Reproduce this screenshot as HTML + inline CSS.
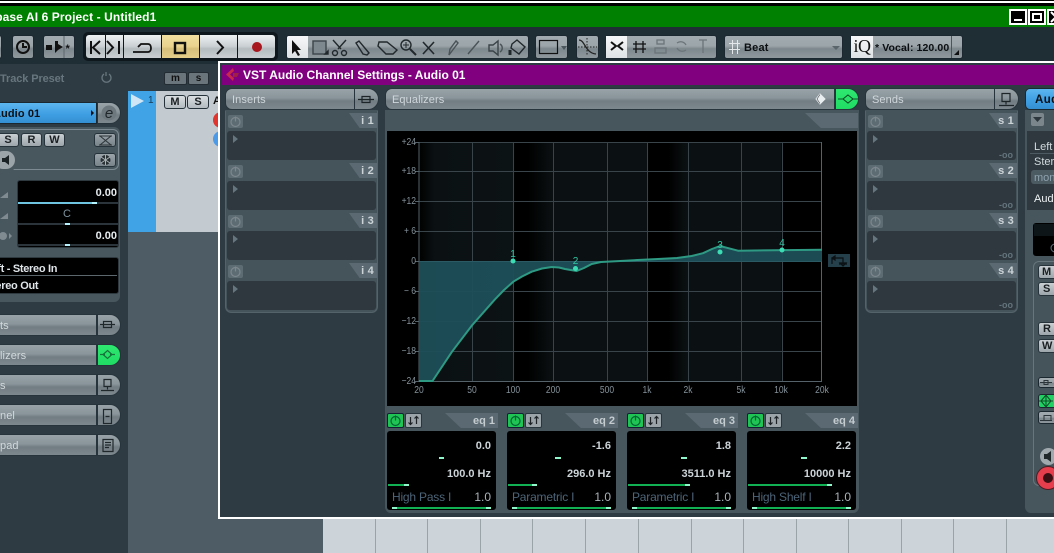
<!DOCTYPE html>
<html><head><meta charset="utf-8"><style>
html,body{margin:0;padding:0;background:#2f3b42}
body{position:relative;width:1054px;height:553px;overflow:hidden;font-family:"Liberation Sans",sans-serif}
div,span{position:absolute;box-sizing:border-box;white-space:nowrap}
svg{position:absolute;overflow:visible}
.g{background:linear-gradient(#a2abb0,#9ca5aa 45%,#7d888e 58%,#8e989d);}
.bb{border:1px solid #1c2830;border-radius:3px}
.w{background:linear-gradient(#eef1f2,#c9cfd2 50%,#b5bcc0 60%,#c9cfd2)}
.hd{background:linear-gradient(#98a3a8,#8a959b 45%,#727d83 60%,#7d888e);border:1px solid #28343b;border-radius:7px 0 0 7px;color:#cfd7db;font-size:11px;letter-spacing:.1px;line-height:22px;padding-left:6px;height:22px}
.hb{background:linear-gradient(#98a3a8,#8a959b 45%,#727d83 60%,#7d888e);border:1px solid #28343b;border-radius:0 11px 11px 0;height:22px}
.col{background:#45535b;top:110px;height:203px;border-radius:0 0 6px 6px}
.tab{background:#5b6a72;clip-path:polygon(0 0,100% 0,100% 100%,38% 100%);height:15px;color:#ccd4d8;font-size:11px;font-weight:bold;text-align:right;line-height:17px;padding-right:3px;letter-spacing:.2px}
.slot{background:#2e383e;height:29px;border-radius:3px;width:149px}
.pw{width:15px;height:13px;background:#5d6b73;border-radius:2px}
.ar{width:0;height:0;border-left:5px solid #66767e;border-top:4px solid transparent;border-bottom:4px solid transparent}
.oo{color:#64747c;font-size:9px;font-weight:bold;right:3px;bottom:0}
.ax{color:#84929a;font-size:10px;line-height:10px;transform:scaleX(.85)}
.yl{width:30px;left:386px;text-align:right;transform-origin:right center}
.xl{width:30px;text-align:center;top:386px}
.pn{background:#000;border-radius:3px;width:109px;height:79px;top:431px}
.v{color:#ccd4d8;font-weight:bold;font-size:11px;right:5px;line-height:12px}
.n{color:#4d6579;font-size:12px;left:5px;top:60px;letter-spacing:-.2px;line-height:13px}
.q{color:#a9b3b8;font-size:12px;right:5px;top:60px;line-height:13px}
.sl{background:#11b052;height:2px;left:1px;top:53px}
.mk{background:#8ff7cb;height:2px}
.on{width:17px;height:15px;top:413px;background:#20c455;border-radius:2px;border:1px solid #123}
.sw{width:17px;height:15px;top:413px;background:#9aa4a9;border-radius:2px;border:1px solid #2a363d}
.et{top:413px;width:53px;height:15px;background:#5b6a72;clip-path:polygon(0 0,100% 0,100% 100%,30% 100%);color:#c4ccd0;font-size:11px;font-weight:bold;text-align:right;line-height:17px;padding-right:3px;letter-spacing:0}
.rk{left:-6px;width:103px;height:22px;padding-left:0;border-radius:0;color:#cfd7db}
.rb{left:97px;width:24px}
.mb{background:linear-gradient(#c9cfd3,#9da6ab);border:1px solid #27333a;border-radius:3px;color:#1a1f22;font-weight:bold;font-size:11px;text-align:center;line-height:12px}
.rl{left:0;color:#d2dadd;font-size:11px;letter-spacing:.1px;line-height:13px}
</style></head><body>
<svg width="0" height="0" style="position:absolute"><defs>
<symbol id="p" viewBox="0 0 15 13"><circle cx="7.5" cy="7" r="4.5" fill="none" stroke="currentColor" stroke-width="1.2"/><path d="M7.5 1.500v5" stroke="currentColor" stroke-width="1.2"/></symbol>
<symbol id="s" viewBox="0 0 17 15"><path d="M5.500 11.500V4M3.500 9.500l2 2 2-2M11.500 11V3.500M9.500 5.500l2-2 2 2" fill="none" stroke="#1c2226" stroke-width="1.200"/></symbol>
</defs></svg>

<!-- screen top -->
<div style="left:0;top:0;width:1054px;height:6px;background:#000"></div>
<div style="left:0;top:1px;width:1054px;height:2px;background:#fff"></div>
<div style="left:0;top:6px;width:1054px;height:21px;background:#008000"></div>
<div style="left:-21px;top:10px;color:#fff;font-weight:bold;font-size:12px;line-height:15px;letter-spacing:.1px">Cubase AI 6 Project - Untitled1</div>
<div style="left:1009px;top:9px;width:18px;height:16px;background:#000;border:2px solid #fff"><span style="left:3px;top:8px;width:8px;height:2px;background:#fff"></span></div>
<div style="left:1028px;top:9px;width:18px;height:16px;background:#000;border:2px solid #fff"><span style="left:2px;top:2px;width:10px;height:8px;border:2px solid #fff"></span></div>
<div style="left:1047px;top:9px;width:18px;height:16px;background:#000;border:2px solid #fff"><svg style="left:2px;top:1px" width="10" height="10"><path d="M0 0l10 10M10 0L0 10" stroke="#fff" stroke-width="2"/></svg></div>

<!-- toolbar -->
<div style="left:0;top:27px;width:1054px;height:37px;background:#1f2d35"></div>
<div class="g bb" style="left:-8px;top:35px;width:10px;height:24px"></div>
<div class="g bb" style="left:12px;top:35px;width:22px;height:24px"></div>
<svg style="left:12px;top:35px" width="22" height="24"><circle cx="11" cy="12" r="6" fill="none" stroke="#111" stroke-width="2"/><path d="M11 8v4h4" fill="none" stroke="#111" stroke-width="2"/></svg>
<div class="g bb" style="left:43px;top:35px;width:32px;height:24px"></div>
<svg style="left:43px;top:35px" width="32" height="24"><path d="M3 10h6v5H3zM12 6l3 0v3l5 3-5 3-3 3z" fill="#111"/><path d="M21 1v22" stroke="#5c666c"/><text x="22.5" y="17" font-family="Liberation Sans" font-weight="bold" font-size="11" fill="#111">*</text></svg>
<div style="left:83px;top:32px;width:195px;height:29px;background:#0e171c;border-radius:5px"></div>
<div class="w" style="left:86px;top:35px;width:19px;height:23px;border-radius:3px 0 0 3px"></div>
<div class="w" style="left:106px;top:35px;width:17px;height:23px"></div>
<div class="w" style="left:124px;top:35px;width:37px;height:23px"></div>
<div style="left:162px;top:35px;width:37px;height:23px;background:linear-gradient(#f2e0a0,#e8d28c 50%,#d6bf7a 60%,#e4ce8a)"></div>
<div class="w" style="left:200px;top:35px;width:37px;height:23px"></div>
<div class="w" style="left:238px;top:35px;width:37px;height:23px;border-radius:0 3px 3px 0"></div>
<svg style="left:83px;top:32px" width="195" height="29" fill="none" stroke="#111" stroke-width="2"><path d="M8 9v13M17 9l-7 6.500 7 6.500M24 9l6 6.500-6 6.500M36 9v13"/><path d="M50 20h15c4 0 4-8 0-8h-7l-3 3" stroke-width="1.800"/><rect x="92" y="11" width="10" height="10" stroke-width="2.400"/><path d="M134 9l6 6.500-6 6.500"/></svg>
<svg style="left:83px;top:32px" width="195" height="29"><circle cx="174" cy="15" r="5" fill="#a8161e"/></svg>

<div class="g bb" style="left:286px;top:35px;width:243px;height:24px"></div>
<div class="w" style="left:287px;top:36px;width:21px;height:22px;border-radius:2px 0 0 2px;background:linear-gradient(#f6f7f8,#dfe3e5)"></div>
<svg style="left:286px;top:35px" width="243" height="26" fill="none" stroke="#22292d" stroke-width="1.4">
<path d="M6 5l0 14 3-3 3 5 2-1-3-5 4 0z" fill="#111" stroke="none"/>
<rect x="27" y="6" width="13" height="13" fill="#7d888e" stroke="#3b4449"/><path d="M39 19l3 0 0-3z" fill="#111"/>
<path d="M47 5l8 9M60 5l-8 9"/><circle cx="49" cy="18" r="2.500"/><circle cx="58" cy="18" r="2.500"/>
<path d="M70 8l3-2 10 12-2 2-4-1z"/>
<path d="M93 7h8l10 8-4 4h-7l-8-8z"/>
<circle cx="120" cy="10" r="5"/><path d="M124 14l6 6" stroke-width="2"/><path d="M117 10h6M120 7v6" stroke-width="1"/>
<path d="M137 7l11 12M148 7l-11 12" stroke-width="1.600"/>
<path d="M163 20l1-6 6-8 2 2-6 8zM163 20" stroke="#4a5358"/>
<path d="M182 19l11-13" stroke="#4a5358"/>
<path d="M203 10h4l5-4v14l-5-4h-4z" stroke="#3a4348"/><path d="M214 9c3 2 3 6 0 8" stroke="#4a5358"/>
<path d="M226 9l5-4 8 7-6 7-8-6z"/><path d="M224 15v5" stroke-width="3"/>
</svg>
<div class="g bb" style="left:535px;top:35px;width:33px;height:24px"></div>
<svg style="left:535px;top:35px" width="33" height="24"><rect x="4.500" y="5.500" width="18" height="13" fill="none" stroke="#111" stroke-width="1.200"/><path d="M26 11h6l-3 4z" fill="#4b565c"/></svg>
<div class="g bb" style="left:576px;top:35px;width:23px;height:24px"></div>
<svg style="left:576px;top:35px" width="23" height="24" fill="none" stroke="#222"><path d="M3 5c6 0 6 13 17 14" stroke="#222" stroke-width="1.300"/><path d="M2 12h19" stroke-dasharray="1.500 1.500"/><path d="M11 3v18" stroke-dasharray="1.500 1.500"/></svg>
<div class="g bb" style="left:605px;top:35px;width:112px;height:24px"></div>
<div style="left:606px;top:36px;width:21px;height:22px;background:linear-gradient(#f6f7f8,#dfe3e5)"></div>
<svg style="left:605px;top:35px" width="112" height="24" fill="none" stroke="#111" stroke-width="1.300"><path d="M6 7l5 4-5 4M18 7l-5 4 5 4" stroke-width="2"/><path d="M28 9h13M28 14h13M31 6v12M38 6v12"/><g stroke="#6a7479"><rect x="52" y="5" width="7" height="4"/><rect x="50" y="13" width="11" height="5"/><path d="M72 8a6 6 0 0 1 9 2M81 15a6 6 0 0 1-9-2"/><path d="M94 5h8M98 5v13"/></g></svg>
<div class="g bb" style="left:724px;top:35px;width:119px;height:24px"></div>
<svg style="left:724px;top:35px" width="119" height="24" fill="none" stroke="#e3e7e9"><path d="M5 8.500h11M5 14.500h11M8.500 5v14M13.500 5v14"/><path d="M108 11h8l-4 4z" fill="#5a656b" stroke="none"/></svg>
<div style="left:744px;top:42px;font-size:11px;font-weight:bold;color:#0c0f11;line-height:13px;letter-spacing:.2px">Beat</div>
<div class="g bb" style="left:850px;top:35px;width:113px;height:24px"></div>
<div style="left:851px;top:36px;width:22px;height:22px;background:linear-gradient(#f6f7f8,#dfe3e5);color:#111;font-family:'Liberation Serif',serif;font-size:18px;line-height:21px;text-align:center;letter-spacing:-.5px">iQ</div>
<div style="left:875px;top:42px;font-size:10.500px;font-weight:bold;color:#0c0f11;line-height:13px;letter-spacing:.1px">* Vocal: 120.00</div>
<div style="left:951px;top:36px;width:1px;height:22px;background:#4b565c"></div>
<svg style="left:954px;top:50px" width="6" height="6"><path d="M5 0v5H0z" fill="#111"/></svg>

<!-- left inspector -->
<div style="left:0;top:64px;width:128px;height:489px;background:#2f3b42"></div>
<div style="left:0;top:73px;font-size:11px;font-weight:bold;color:#67767e;line-height:13px;letter-spacing:-.1px">Track Preset</div>
<svg style="left:100px;top:71px" width="12" height="13" fill="none" stroke="#67767e" stroke-width="1.300"><path d="M4 3a4.500 4.500 0 1 0 5 0M6 1v4"/></svg>
<div style="left:-8px;top:102px;width:105px;height:22px;background:linear-gradient(#5cb6ef,#3f9fe3 55%,#338fd2);border:1px solid #1c2830;border-radius:4px 0 0 4px;font-size:11px;font-weight:bold;color:#0b1014;line-height:22px;padding-left:0;letter-spacing:.1px">Audio 01</div>
<svg style="left:91px;top:110px" width="4" height="6"><path d="M0 0l3 3-3 3z" fill="#111"/></svg>
<div class="hb" style="left:97px;top:102px;width:24px"></div>
<svg style="left:97px;top:102px" width="24" height="22"><circle cx="12" cy="11" r="7.500" fill="#6d787e"/><text x="12" y="16" text-anchor="middle" font-family="Liberation Sans" font-size="15" font-style="italic" fill="#1f272b">e</text></svg>
<div style="left:-6px;top:127px;width:126px;height:175px;background:#48565e;border-radius:6px"></div>
<div style="left:-8px;top:129px;width:127px;height:41px;border:1px solid #7d8a91;border-radius:6px;clip-path:polygon(0 0,100% 0,100% 100%,17% 100%,17% 90%,0 90%)"></div>
<div class="mb" style="left:-3px;top:133px;width:22px;height:14px">S</div>
<div class="mb" style="left:21px;top:133px;width:21px;height:14px">R</div>
<div class="mb" style="left:44px;top:133px;width:21px;height:14px">W</div>
<div class="mb" style="left:94px;top:133px;width:22px;height:14px;background:linear-gradient(#9aa4a9,#78838a)"><svg style="left:3px;top:1px" width="15" height="11" fill="none" stroke="#2c3438"><path d="M1 1h13M1 10h13M2 1l11 9M13 1L2 10"/></svg></div>
<div class="mb" style="left:94px;top:153px;width:22px;height:14px;background:linear-gradient(#9aa4a9,#78838a)"><svg style="left:4px;top:0" width="13" height="12"><circle cx="6.500" cy="6" r="5" fill="#2a3135"/><path d="M6.500 1v10M2 3l9 6M11 3l-9 6" stroke="#aab2b6"/></svg></div>
<div style="left:-6px;top:151px;width:21px;height:18px;border-radius:9px;background:#9aa4a9"></div>
<svg style="left:1px;top:154px" width="10" height="12"><path d="M1 4h3l4-3v10L4 8H1z" fill="#1c2326"/></svg>
<svg style="left:0;top:188px" width="16" height="60"><path d="M0 7L8 1v6z" fill="#7f8b91" transform="translate(0 3)"/><path d="M0 28L8 22v6z" fill="#7f8b91" transform="translate(0 3)"/><circle cx="3" cy="48" r="4" fill="#7f8b91"/><path d="M9 45l3 3-3 3z" fill="#7f8b91"/></svg>
<div style="left:17px;top:180px;width:102px;height:68px;background:#000;border:1px solid #2d383f;border-radius:3px"></div>
<div class="v" style="right:937px;top:187px;color:#e5ebee">0.00</div>
<div style="left:18px;top:202px;width:100px;height:2px;background:#2a343a"></div><div style="left:18px;top:202px;width:74px;height:2px;background:#6fc4e0"></div><div style="left:92px;top:202px;width:5px;height:2px;background:#b5f4ff"></div>
<div style="left:63px;top:208px;font-size:11px;color:#7d929e;line-height:12px">C</div>
<div style="left:18px;top:223px;width:100px;height:2px;background:#2a343a"></div><div style="left:65px;top:223px;width:5px;height:2px;background:#b5f4ff"></div>
<div class="v" style="right:937px;top:230px;color:#e5ebee">0.00</div>
<div style="left:18px;top:244px;width:100px;height:2px;background:#2a343a"></div><div style="left:65px;top:244px;width:5px;height:2px;background:#b5f4ff"></div>
<div style="left:-6px;top:257px;width:125px;height:37px;background:#000;border:1px solid #2d383f;border-radius:3px"></div>
<div style="left:0;top:275px;width:117px;height:1px;background:#5c676d"></div>
<div style="left:-15px;top:263px;font-size:11px;font-weight:bold;color:#dfe5e8;line-height:13px;letter-spacing:-.3px">Left - Stereo In</div>
<div style="left:-15px;top:280px;font-size:11px;font-weight:bold;color:#dfe5e8;line-height:13px;letter-spacing:-.3px">Stereo Out</div>

<div class="hd rk" style="top:314px"></div><div class="hb rb" style="top:314px"></div>
<div class="hd rk" style="top:344px"></div><div class="hb rb" style="top:344px;background:linear-gradient(#2ee870,#20dc64)"></div>
<div class="hd rk" style="top:374px"></div><div class="hb rb" style="top:374px"></div>
<div class="hd rk" style="top:404px"></div><div class="hb rb" style="top:404px"></div>
<div class="hd rk" style="top:434px"></div><div class="hb rb" style="top:434px"></div>
<div class="rl" style="top:320px">ts</div>
<div class="rl" style="top:350px">lizers</div>
<div class="rl" style="top:380px">s</div>
<div class="rl" style="top:410px">nel</div>
<div class="rl" style="top:440px">pad</div>
<svg style="left:97px;top:314px" width="24" height="145" fill="none" stroke="#20282c" stroke-width="1.200"><path d="M3 10.500h15M6.500 7.500h8v6h-8z"/><path d="M3 40.500h5M13 40.500h5M10.500 36.500l4.500 4-4.500 4-4.500-4z" stroke="#16733a"/><path d="M7 65.500h7v7H7zM10.500 72.500v3M4 76.500h13"/><path d="M6.500 95.500h8v14h-8zM8.500 102.500h4"/><path d="M6 125.500h10v12H6zM8 128.500h6M8 131h6M8 133.500h4"/></svg>

<!-- arrangement -->
<div style="left:128px;top:64px;width:926px;height:489px;background:#4e5d65"></div>
<div style="left:128px;top:64px;width:91px;height:27px;background:#2f3b42"></div>
<div style="left:164px;top:72px;width:23px;height:13px;background:#6a757b;border:1px solid #222c32;border-radius:2px;font-size:10px;font-weight:bold;text-align:center;line-height:11px;color:#111">m</div>
<div style="left:188px;top:72px;width:21px;height:13px;background:#6a757b;border:1px solid #222c32;border-radius:2px;font-size:10px;font-weight:bold;text-align:center;line-height:11px;color:#111">s</div>
<div style="left:128px;top:91px;width:28px;height:141px;background:#3fa3e6"></div>
<div style="left:156px;top:91px;width:63px;height:141px;background:#c3cbd1"></div>
<svg style="left:131px;top:94px" width="13" height="14"><path d="M0 0l13 7L0 14z" fill="#cfe6f7"/></svg>
<div style="left:148px;top:95px;font-size:10px;color:#1a3a55;line-height:12px">1</div>
<div class="mb" style="left:164px;top:95px;width:22px;height:14px;background:linear-gradient(#d9dee1,#b4bcc1)">M</div>
<div class="mb" style="left:187px;top:95px;width:22px;height:14px;background:linear-gradient(#d9dee1,#b4bcc1)">S</div>
<div style="left:213px;top:95px;font-size:11px;font-weight:bold;color:#111;line-height:13px">A</div>
<div style="left:213px;top:112px;width:16px;height:16px;border-radius:8px;background:#e0342e"></div>
<div style="left:213px;top:131px;width:16px;height:16px;border-radius:8px;background:#4a9ae8"></div>
<div style="left:323px;top:519px;width:731px;height:34px;background:#ccd4d9"></div>
<svg style="left:323px;top:519px" width="731" height="34" stroke="#9aa3a8"><path d="M52.500 0v34M104.500 0v34M157.500 0v34M209.500 0v34M262.500 0v34M315.500 0v34M368.500 0v34M420.500 0v34M473.500 0v34M525.500 0v34M578.500 0v34M630.500 0v34M683.500 0v34"/></svg>

<!-- VST window -->
<div style="left:218px;top:61px;width:840px;height:458px;background:#fff"></div>
<div style="left:220px;top:63px;width:840px;height:454px;background:#2f3b42"></div>
<div style="left:221px;top:65px;width:840px;height:20px;background:#800080"></div>
<svg style="left:225px;top:67px" width="15" height="15"><path d="M1 7.500L8 1l1 3-4 3.500 4 3.500-1 3z" fill="#c8284a"/><path d="M8 6h6l-2 4-4 0z" fill="#a01f46"/></svg>
<div style="left:243px;top:68px;color:#fff;font-weight:bold;font-size:12px;line-height:15px;letter-spacing:0">VST Audio Channel Settings - Audio 01</div>

<!-- Inserts -->
<div class="hd" style="left:225px;top:88px;width:130px">Inserts</div>
<div class="hb" style="left:354px;top:88px;width:25px"></div>
<svg style="left:354px;top:88px" width="25" height="22" fill="none" stroke="#1d2529" stroke-width="1.200"><path d="M4 11.500h16M8 8.500h8v6H8z"/></svg>
<div class="col" style="left:225px;width:153px"></div>
<div style="left:225px;top:111px;width:153px;height:202px;border:1px solid #54626a;border-top:none;border-radius:0 0 7px 7px"></div>

<div class="pw" style="left:228px;top:115px"></div><svg style="left:228px;top:115px;color:#7c888e" width="15" height="13"><use href="#p"/></svg>
<div class="tab" style="left:349px;top:113px;width:28px">i 1</div><div class="slot" style="left:227px;top:131px"><span class="ar" style="left:6px;top:4px"></span></div>
<div class="pw" style="left:228px;top:165px"></div><svg style="left:228px;top:165px;color:#7c888e" width="15" height="13"><use href="#p"/></svg>
<div class="tab" style="left:349px;top:163px;width:28px">i 2</div><div class="slot" style="left:227px;top:181px"><span class="ar" style="left:6px;top:4px"></span></div>
<div class="pw" style="left:228px;top:215px"></div><svg style="left:228px;top:215px;color:#7c888e" width="15" height="13"><use href="#p"/></svg>
<div class="tab" style="left:349px;top:213px;width:28px">i 3</div><div class="slot" style="left:227px;top:231px"><span class="ar" style="left:6px;top:4px"></span></div>
<div class="pw" style="left:228px;top:265px"></div><svg style="left:228px;top:265px;color:#7c888e" width="15" height="13"><use href="#p"/></svg>
<div class="tab" style="left:349px;top:263px;width:28px">i 4</div><div class="slot" style="left:227px;top:281px"><span class="ar" style="left:6px;top:4px"></span></div>

<!-- Sends -->
<div class="hd" style="left:865px;top:88px;width:130px">Sends</div>
<div class="hb" style="left:994px;top:88px;width:25px"></div>
<svg style="left:994px;top:88px" width="25" height="22" fill="none" stroke="#1d2529" stroke-width="1.200"><path d="M8 5.500h8v8H8zM12 13.500v3M5 17.500h15"/></svg>
<div class="col" style="left:865px;width:153px"></div>
<div style="left:865px;top:111px;width:153px;height:202px;border:1px solid #54626a;border-top:none;border-radius:0 0 7px 7px"></div>

<div class="pw" style="left:868px;top:115px"></div><svg style="left:868px;top:115px;color:#7c888e" width="15" height="13"><use href="#p"/></svg>
<div class="tab" style="left:989px;top:113px;width:28px">s 1</div><div class="slot" style="left:867px;top:131px"><span class="ar" style="left:6px;top:4px"></span><span class="oo">-oo</span></div>
<div class="pw" style="left:868px;top:165px"></div><svg style="left:868px;top:165px;color:#7c888e" width="15" height="13"><use href="#p"/></svg>
<div class="tab" style="left:989px;top:163px;width:28px">s 2</div><div class="slot" style="left:867px;top:181px"><span class="ar" style="left:6px;top:4px"></span><span class="oo">-oo</span></div>
<div class="pw" style="left:868px;top:215px"></div><svg style="left:868px;top:215px;color:#7c888e" width="15" height="13"><use href="#p"/></svg>
<div class="tab" style="left:989px;top:213px;width:28px">s 3</div><div class="slot" style="left:867px;top:231px"><span class="ar" style="left:6px;top:4px"></span><span class="oo">-oo</span></div>
<div class="pw" style="left:868px;top:265px"></div><svg style="left:868px;top:265px;color:#7c888e" width="15" height="13"><use href="#p"/></svg>
<div class="tab" style="left:989px;top:263px;width:28px">s 4</div><div class="slot" style="left:867px;top:281px"><span class="ar" style="left:6px;top:4px"></span><span class="oo">-oo</span></div>

<!-- Equalizers -->
<div class="hd" style="left:385px;top:88px;width:450px">Equalizers</div>
<div class="hb" style="left:835px;top:88px;width:24px;background:linear-gradient(#2ee870,#20dc64)"></div>
<svg style="left:812px;top:88px" width="47" height="22" fill="none"><path d="M8 6l5 5-5 5-4-5z" fill="#e8eef0" stroke="#e8eef0"/><path d="M8 6.500l-3 4.500 3 4.500" stroke="#444" stroke-width=".6"/><path d="M26 11h5M41 11h5M36 7l5 4-5 4-5-4z" stroke="#0e4d26" stroke-width="1.100"/></svg>
<div style="left:385px;top:110px;width:474px;height:403px;background:#47555d;border-radius:0 0 6px 6px"></div>
<div style="left:805px;top:113px;width:53px;height:15px;background:#5b6a72;clip-path:polygon(0 0,100% 0,100% 100%,30% 100%)"></div>
<div style="left:387px;top:131px;width:470px;height:275px;background:#000"></div>
<svg style="left:387px;top:131px" width="470" height="275">
<defs><linearGradient id="bg" gradientUnits="userSpaceOnUse" x1="32" x2="435" y1="0" y2="0">
<stop offset="0" stop-color="#000"/><stop offset=".04" stop-color="#0b1113"/><stop offset=".233" stop-color="#0c1315"/><stop offset=".237" stop-color="#000"/><stop offset=".27" stop-color="#000"/><stop offset=".335" stop-color="#0b1113"/><stop offset=".565" stop-color="#0b1113"/><stop offset=".57" stop-color="#000"/><stop offset=".62" stop-color="#000"/><stop offset=".665" stop-color="#0b1113"/><stop offset=".898" stop-color="#0b1113"/><stop offset=".902" stop-color="#000"/><stop offset="1" stop-color="#000"/></linearGradient></defs>
<rect x="32" y="11" width="403" height="239" fill="url(#bg)"/>
<g stroke="#39444a" fill="none"><path d="M32 11.500h403M32 40.500h403M32 70.500h403M32 100.500h403M32 160.500h403M32 190.500h403M32 220.500h403"/><path d="M85.500 11v239M126.500 11v239M166.500 11v239M220.500 11v239M260.500 11v239M301.500 11v239M354.500 11v239M395.500 11v239"/><path d="M28 11.500h4M28 40.500h4M28 70.500h4M28 100.500h4M28 130.500h4M28 160.500h4M28 190.500h4M28 220.500h4M28 250.500h4" stroke="#55626a"/></g>
<path d="M32 11v239M434.500 11v239M32 250.500h403" stroke="#55626a" fill="none"/>
<path d="M32 130 L32 250 L45.500 250 L65 220.700 L85.300 194 L108 168.300 L117 159 L126.300 150.700 L135 145.500 L144.700 140.700 L155 137.500 L164.700 136 L172 136.500 L178 138 L189.700 140 L197 137 L204.700 133 L214 131 L238 129.700 L271 128 L290 127 L304.700 125 L316 122.200 L325 118 L333 115 L340 116.800 L351 119.700 L435 118.700 L435 130 Z" fill="#1e4f58" fill-opacity=".95"/>
<path d="M32 130.500H435" stroke="#2c5a64" fill="none"/>
<path d="M32 250 L45.500 250 L65 220.700 L85.300 194 L108 168.300 L117 159 L126.300 150.700 L135 145.500 L144.700 140.700 L155 137.500 L164.700 136 L172 136.500 L178 138 L189.700 140 L197 137 L204.700 133 L214 131 L238 129.700 L271 128 L290 127 L304.700 125 L316 122.200 L325 118 L333 115 L340 116.800 L351 119.700 L435 118.700" stroke="#2e9a84" stroke-width="2" stroke-linejoin="round" fill="none"/>
<g fill="#3cdcb4"><circle cx="126" cy="130" r="2.500"/><circle cx="188.500" cy="137.500" r="2.500"/><circle cx="333" cy="121" r="2.500"/><circle cx="395" cy="119" r="2.500"/></g>
<g font-family="Liberation Sans" font-size="10" fill="#2fc8a4" text-anchor="middle"><text x="126" y="126">1</text><text x="188.500" y="133">2</text><text x="333" y="117">3</text><text x="395" y="115">4</text></g>
<rect x="441" y="123" width="22" height="13" fill="#25404a"/>
<path d="M445 133v-6h3M445 127l3-2v4zM448 127h8v6M452 133h8M456 135l-3-3h6z" stroke="#0b1114" fill="none" stroke-width="1.200"/>
</svg>
<div class="ax yl" style="top:138px">+24</div><div class="ax yl" style="top:167px">+18</div><div class="ax yl" style="top:197px">+12</div><div class="ax yl" style="top:227px">+ 6</div><div class="ax yl" style="top:257px">0</div><div class="ax yl" style="top:287px">− 6</div><div class="ax yl" style="top:317px">−12</div><div class="ax yl" style="top:347px">−18</div><div class="ax yl" style="top:377px">−24</div>
<div class="ax xl" style="left:404px">20</div><div class="ax xl" style="left:457px">50</div><div class="ax xl" style="left:498px">100</div><div class="ax xl" style="left:538px">200</div><div class="ax xl" style="left:592px">500</div><div class="ax xl" style="left:632px">1k</div><div class="ax xl" style="left:673px">2k</div><div class="ax xl" style="left:726px">5k</div><div class="ax xl" style="left:766px">10k</div><div class="ax xl" style="left:807px">20k</div>

<!-- EQ strips -->
<div class="on" style="left:387px"></div><svg style="left:388px;top:414px;color:#063;" width="15" height="13"><use href="#p"/></svg><div class="sw" style="left:405px"></div><svg style="left:405px;top:413px" width="17" height="15"><use href="#s"/></svg><div class="et" style="left:445px">eq 1</div>
<div class="pn" style="left:387px"><span class="v" style="top:9px">0.0</span><span class="mk" style="left:52px;top:26px;width:5px"></span><span class="v" style="top:37px">100.0 Hz</span><span class="sl" style="width:17px"></span><span class="mk" style="left:17px;top:53px;width:5px"></span><span class="n">High Pass I</span><span class="q">1.0</span><span class="sl" style="left:5px;top:76px;width:99px"></span><span class="mk" style="left:5px;top:76px;width:5px"></span><span class="mk" style="left:99px;top:76px;width:5px"></span></div>
<div class="on" style="left:507px"></div><svg style="left:508px;top:414px;color:#063;" width="15" height="13"><use href="#p"/></svg><div class="sw" style="left:525px"></div><svg style="left:525px;top:413px" width="17" height="15"><use href="#s"/></svg><div class="et" style="left:565px">eq 2</div>
<div class="pn" style="left:507px"><span class="v" style="top:9px">-1.6</span><span class="mk" style="left:48px;top:26px;width:6px"></span><span class="v" style="top:37px">296.0 Hz</span><span class="sl" style="width:25px"></span><span class="mk" style="left:25px;top:53px;width:5px"></span><span class="n">Parametric I</span><span class="q">1.0</span><span class="sl" style="left:5px;top:76px;width:99px"></span><span class="mk" style="left:5px;top:76px;width:5px"></span><span class="mk" style="left:99px;top:76px;width:5px"></span></div>
<div class="on" style="left:627px"></div><svg style="left:628px;top:414px;color:#063;" width="15" height="13"><use href="#p"/></svg><div class="sw" style="left:645px"></div><svg style="left:645px;top:413px" width="17" height="15"><use href="#s"/></svg><div class="et" style="left:685px">eq 3</div>
<div class="pn" style="left:627px"><span class="v" style="top:9px">1.8</span><span class="mk" style="left:54px;top:26px;width:6px"></span><span class="v" style="top:37px">3511.0 Hz</span><span class="sl" style="width:58px"></span><span class="mk" style="left:58px;top:53px;width:5px"></span><span class="n">Parametric I</span><span class="q">1.0</span><span class="sl" style="left:5px;top:76px;width:99px"></span><span class="mk" style="left:5px;top:76px;width:5px"></span><span class="mk" style="left:99px;top:76px;width:5px"></span></div>
<div class="on" style="left:747px"></div><svg style="left:748px;top:414px;color:#063;" width="15" height="13"><use href="#p"/></svg><div class="sw" style="left:765px"></div><svg style="left:765px;top:413px" width="17" height="15"><use href="#s"/></svg><div class="et" style="left:805px">eq 4</div>
<div class="pn" style="left:747px"><span class="v" style="top:9px">2.2</span><span class="mk" style="left:54px;top:26px;width:6px"></span><span class="v" style="top:37px">10000 Hz</span><span class="sl" style="width:80px"></span><span class="mk" style="left:80px;top:53px;width:5px"></span><span class="n">High Shelf I</span><span class="q">1.0</span><span class="sl" style="left:5px;top:76px;width:99px"></span><span class="mk" style="left:5px;top:76px;width:5px"></span><span class="mk" style="left:99px;top:76px;width:5px"></span></div>

<!-- Right channel -->
<div style="left:1025px;top:88px;width:40px;height:22px;background:linear-gradient(#5cb6ef,#3f9fe3 55%,#338fd2);border:1px solid #1c2830;border-radius:5px 0 0 5px;font-size:11.500px;font-weight:bold;color:#0b1014;line-height:22px;padding-left:9px;letter-spacing:.4px">Audio</div>
<div style="left:1025px;top:110px;width:40px;height:403px;background:#47555d;border-radius:0 0 0 6px"></div>
<div style="left:1031px;top:113px;width:13px;height:13px;background:#7a868c;border-radius:2px"></div>
<svg style="left:1033px;top:117px" width="9" height="6"><path d="M0 0h9L4.500 5z" fill="#2c363c"/></svg>
<div style="left:1027px;top:131px;width:30px;height:79px;background:#2e383e"></div>
<div style="left:1034px;top:141px;color:#d3dade;font-size:11px;line-height:13px">Left</div>
<div style="left:1030px;top:153px;width:24px;height:1px;background:#4d5a62"></div>
<div style="left:1034px;top:156px;color:#d3dade;font-size:11px;line-height:13px">Stereo</div>
<div style="left:1031px;top:170px;width:26px;height:14px;background:#4c5a62;border-radius:3px"></div>
<div style="left:1034px;top:172px;color:#8ea3af;font-size:11px;line-height:13px">mono</div>
<div style="left:1034px;top:193px;color:#f0f4f6;font-size:11px;line-height:13px">Audio</div>
<div style="left:1033px;top:223px;width:24px;height:33px;background:#000;border-radius:3px"></div>
<div style="left:1034px;top:224px;width:22px;height:12px;background:#0e1518"></div>
<svg style="left:1049px;top:243px" width="8" height="10"><circle cx="6" cy="5" r="4" fill="none" stroke="#62747d"/></svg>
<div style="left:1033px;top:261px;width:30px;height:225px;border:1px solid #67757c;border-radius:6px;background:#45535b"></div>
<div class="mb" style="left:1038px;top:265px;width:24px;height:14px;text-align:left;padding-left:3px">M</div>
<div class="mb" style="left:1038px;top:282px;width:24px;height:14px;text-align:left;padding-left:4px">S</div>
<div class="mb" style="left:1038px;top:322px;width:24px;height:14px;text-align:left;padding-left:4px">R</div>
<div class="mb" style="left:1038px;top:339px;width:24px;height:14px;text-align:left;padding-left:3px">W</div>
<div class="g bb" style="left:1038px;top:377px;width:24px;height:11px"></div>
<div class="bb" style="left:1038px;top:394px;width:24px;height:14px;background:#22d163"></div>
<div class="g bb" style="left:1038px;top:411px;width:24px;height:13px"></div>
<svg style="left:1038px;top:377px" width="16" height="50" fill="none" stroke="#2c353a"><path d="M2 5.500h12M6 3.500h4v4H6z"/><path d="M8 18l-5 6 5 6 5-6zM8 18v12M1 24h14" stroke="#0e4d26"/><path d="M2 43.500h12M6 38.500h7v5H6z"/></svg>
<div style="left:1040px;top:448px;width:17px;height:17px;border-radius:9px;background:#a0a9ae"></div>
<svg style="left:1044px;top:451px" width="9" height="11"><path d="M0 3h3l4-3v11L3 8H0z" fill="#20282c"/></svg>
<div style="left:1036px;top:466px;width:24px;height:24px;border-radius:12px;background:#e63e4c;border:1px solid #4d1d24"></div>
<div style="left:1043px;top:473px;width:10px;height:10px;border-radius:5px;background:#3a1014"></div>
</body></html>
